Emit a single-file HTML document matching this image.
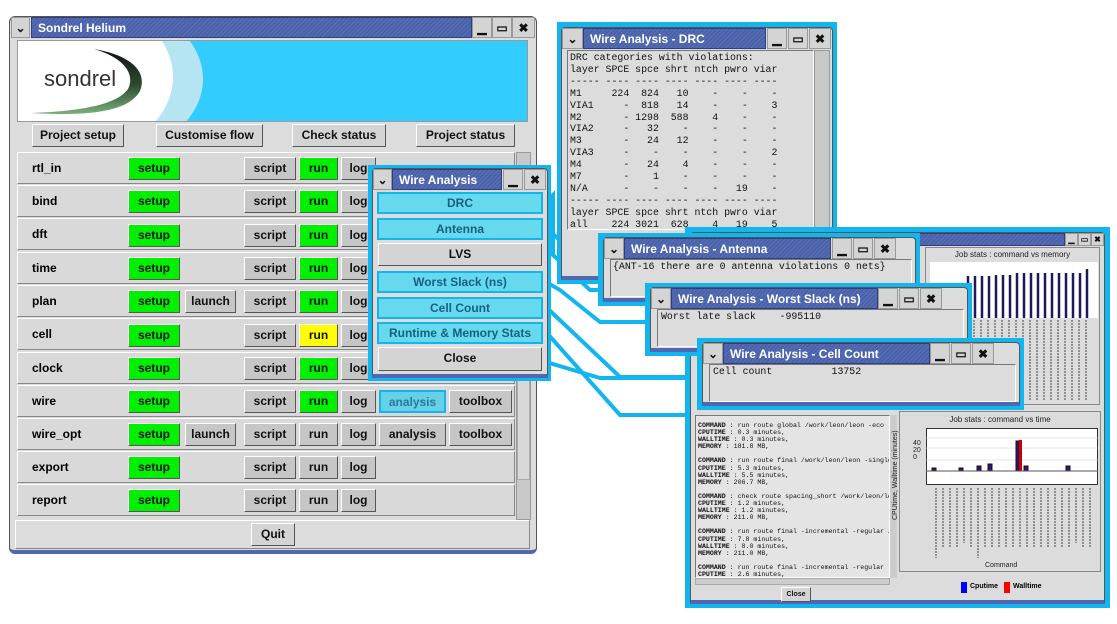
<!DOCTYPE html>
<html><head><meta charset="utf-8"><style>
*{box-sizing:border-box;margin:0;padding:0}
body{width:1117px;height:624px;background:#fff;position:relative;overflow:hidden;font-family:"Liberation Sans",sans-serif}
.a{position:absolute}
.frame{position:absolute;background:#13b5ef}
.win{position:absolute;background:#dcdcdc;border:1px solid #555;border-radius:4px 4px 0 0}
.tb{position:absolute;height:21px;background:repeating-linear-gradient(135deg,#4b62aa 0 2px,#5870b6 2px 3px);color:#fff;font-weight:bold;font-size:12px;line-height:21px;padding-left:6px;border:1px solid #2e3f80}
.tbtn{position:absolute;width:20px;height:21px;background:#d4d4d4;border:1px solid #999;font-size:12px;font-weight:bold;text-align:center;line-height:20px;color:#111}
.b{position:absolute;height:23px;background:#c6c6c6;border:1px solid;border-color:#fff #555 #555 #fff;font-weight:bold;font-size:12px;text-align:center;line-height:21px;color:#111}
.g{background:#00f000}
.row{position:absolute;left:17px;width:498px;height:32px;background:#d9d9d9;border:1px solid;border-color:#fff #888 #888 #fff}
.lbl{position:absolute;left:14px;top:8px;font-weight:bold;font-size:12px}
.mb{position:absolute;left:377px;width:166px;height:22px;background:#66d9ef;border:2px solid #13b5ef;color:#186080;font-weight:bold;font-size:12px;text-align:center;line-height:18px}
.mono{font-family:"Liberation Mono",monospace;font-size:9.9px;line-height:11.9px;white-space:pre;color:#111}
.txt{position:absolute;background:#dcdcdc;border:1px solid;border-color:#777 #fff #fff #777}
</style></head><body>

<svg class="a" style="left:0;top:0" width="1117" height="624">
<g fill="none" stroke="#13b5ef" stroke-width="4">
<polyline points="546,202 553,195 553,255 575,275 600,275"/>
<polyline points="546,228 560,240 560,262 590,290 600,290"/>
<polyline points="546,282 560,290 600,322 647,322"/>
<polyline points="546,307 620,377 697,377"/>
<polyline points="546,332 620,415 697,415"/>
<polyline points="546,362 600,378 690,378"/>
</g></svg>

<!-- MAIN WINDOW -->
<div class="win" style="left:9px;top:16px;width:528px;height:538px;border-radius:6px;border-bottom:4px solid #5068b0"></div>
<div class="tbtn" style="left:11px;top:17px;width:19px">⌄</div>
<div class="tb" style="left:31px;top:17px;width:441px">Sondrel Helium</div>
<div class="tbtn" style="left:472px;top:17px">▁</div>
<div class="tbtn" style="left:492px;top:17px">▭</div>
<div class="tbtn" style="left:512px;top:17px;width:23px">✖</div>
<div class="a" style="left:17px;top:40px;width:511px;height:82px;background:#33ccff;overflow:hidden;border:1px solid #999">
<svg class="a" style="left:0;top:0" width="511" height="82">
<defs><linearGradient id="sw" x1="0" y1="0" x2="0" y2="1"><stop offset="0" stop-color="#111"/><stop offset="0.55" stop-color="#2d4a2d"/><stop offset="1" stop-color="#7ab07a"/></linearGradient></defs>
<ellipse cx="60" cy="38" rx="125" ry="85" fill="#b5e5f2"/>
<ellipse cx="45" cy="36" rx="110" ry="82" fill="#fff"/>
<path d="M76,8 C112,14 130,30 122,50 C112,68 80,76 13,72 C70,70 100,62 110,48 C118,32 104,16 76,8Z" fill="url(#sw)"/>
</svg>
 <div class="a" style="left:26px;top:25px;font-size:22px;color:#333">sondrel</div>
</div>
<div class="b" style="left:32px;top:124px;width:92px;background:#d4d4d4">Project setup</div>
<div class="b" style="left:156px;top:124px;width:107px;background:#d4d4d4">Customise flow</div>
<div class="b" style="left:292px;top:124px;width:94px;background:#d4d4d4">Check status</div>
<div class="b" style="left:416px;top:124px;width:99px;background:#d4d4d4">Project status</div>
<div class="a" style="left:516px;top:152px;width:15px;height:368px;background:#c8c8c8;border:1px solid #999"></div>
<div class="a" style="left:517px;top:170px;width:13px;height:310px;background:#d8d8d8;border:1px solid #aaa"></div>

<div class="row" style="top:152px"><span class="lbl">rtl_in</span></div>
<div class="row" style="top:185px"><span class="lbl">bind</span></div>
<div class="row" style="top:218px"><span class="lbl">dft</span></div>
<div class="row" style="top:252px"><span class="lbl">time</span></div>
<div class="row" style="top:285px"><span class="lbl">plan</span></div>
<div class="row" style="top:318px"><span class="lbl">cell</span></div>
<div class="row" style="top:352px"><span class="lbl">clock</span></div>
<div class="row" style="top:385px"><span class="lbl">wire</span></div>
<div class="row" style="top:418px"><span class="lbl">wire_opt</span></div>
<div class="row" style="top:451px"><span class="lbl">export</span></div>
<div class="row" style="top:484px"><span class="lbl">report</span></div>

<div class="b g" style="left:128px;top:157px;width:52px">setup</div><div class="b" style="left:244px;top:157px;width:52px">script</div><div class="b g" style="left:299px;top:157px;width:39px">run</div><div class="b" style="left:341px;top:157px;width:35px">log</div>
<div class="b g" style="left:128px;top:190px;width:52px">setup</div><div class="b" style="left:244px;top:190px;width:52px">script</div><div class="b g" style="left:299px;top:190px;width:39px">run</div><div class="b" style="left:341px;top:190px;width:35px">log</div>
<div class="b g" style="left:128px;top:224px;width:52px">setup</div><div class="b" style="left:244px;top:224px;width:52px">script</div><div class="b g" style="left:299px;top:224px;width:39px">run</div><div class="b" style="left:341px;top:224px;width:35px">log</div>
<div class="b g" style="left:128px;top:257px;width:52px">setup</div><div class="b" style="left:244px;top:257px;width:52px">script</div><div class="b g" style="left:299px;top:257px;width:39px">run</div><div class="b" style="left:341px;top:257px;width:35px">log</div>
<div class="b g" style="left:128px;top:290px;width:52px">setup</div><div class="b" style="left:185px;top:290px;width:51px">launch</div><div class="b" style="left:244px;top:290px;width:52px">script</div><div class="b g" style="left:299px;top:290px;width:39px">run</div><div class="b" style="left:341px;top:290px;width:35px">log</div>
<div class="b g" style="left:128px;top:324px;width:52px">setup</div><div class="b" style="left:244px;top:324px;width:52px">script</div><div class="b" style="left:299px;top:324px;width:39px;background:#ffff00">run</div><div class="b" style="left:341px;top:324px;width:35px">log</div>
<div class="b g" style="left:128px;top:357px;width:52px">setup</div><div class="b" style="left:244px;top:357px;width:52px">script</div><div class="b g" style="left:299px;top:357px;width:39px">run</div><div class="b" style="left:341px;top:357px;width:35px">log</div>
<div class="b g" style="left:128px;top:390px;width:52px">setup</div><div class="b" style="left:244px;top:390px;width:52px">script</div><div class="b g" style="left:299px;top:390px;width:39px">run</div><div class="b" style="left:341px;top:390px;width:35px">log</div><div class="b" style="left:379px;top:390px;width:67px;background:#66d0e6;border:2px solid #13b5ef;color:#2a7a9a">analysis</div><div class="b" style="left:449px;top:390px;width:63px">toolbox</div>
<div class="b g" style="left:128px;top:423px;width:52px">setup</div><div class="b" style="left:185px;top:423px;width:51px">launch</div><div class="b" style="left:244px;top:423px;width:52px">script</div><div class="b" style="left:299px;top:423px;width:39px">run</div><div class="b" style="left:341px;top:423px;width:35px">log</div><div class="b" style="left:379px;top:423px;width:67px">analysis</div><div class="b" style="left:449px;top:423px;width:63px">toolbox</div>
<div class="b g" style="left:128px;top:456px;width:52px">setup</div><div class="b" style="left:244px;top:456px;width:52px">script</div><div class="b" style="left:299px;top:456px;width:39px">run</div><div class="b" style="left:341px;top:456px;width:35px">log</div>
<div class="b g" style="left:128px;top:489px;width:52px">setup</div><div class="b" style="left:244px;top:489px;width:52px">script</div><div class="b" style="left:299px;top:489px;width:39px">run</div><div class="b" style="left:341px;top:489px;width:35px">log</div>
<div class="a" style="left:15px;top:520px;width:515px;height:29px;border:1px solid;border-color:#fff #888 #888 #fff"></div>
<div class="b" style="left:251px;top:523px;width:44px;background:#d4d4d4">Quit</div>

<!-- WIRE ANALYSIS MENU -->
<div class="frame" style="left:368px;top:165px;width:183px;height:216px"></div>
<div class="win" style="left:372px;top:168px;width:176px;height:210px;border-bottom:4px solid #5068b0"></div>
<div class="tbtn" style="left:373px;top:169px;width:19px">⌄</div>
<div class="tb" style="left:392px;top:169px;width:110px">Wire Analysis</div>
<div class="tbtn" style="left:503px;top:169px">▁</div>
<div class="tbtn" style="left:524px;top:169px;width:22px">✖</div>
<div class="mb" style="top:192px">DRC</div>
<div class="mb" style="top:218px">Antenna</div>
<div class="b" style="left:378px;top:243px;width:164px;background:#d4d4d4">LVS</div>
<div class="mb" style="top:271px">Worst Slack (ns)</div>
<div class="mb" style="top:297px">Cell Count</div>
<div class="mb" style="top:322px">Runtime &amp; Memory Stats</div>
<div class="b" style="left:378px;top:347px;width:164px;height:24px;background:#d4d4d4">Close</div>

<!-- DRC WINDOW -->
<div class="frame" style="left:557px;top:22px;width:280px;height:262px"></div>
<div class="win" style="left:561px;top:27px;width:272px;height:253px;border-bottom:4px solid #5068b0"></div>
<div class="tbtn" style="left:562px;top:28px;width:21px">⌄</div>
<div class="tb" style="left:583px;top:28px;width:183px">Wire Analysis - DRC</div>
<div class="tbtn" style="left:767px;top:28px">▁</div>
<div class="tbtn" style="left:788px;top:28px">▭</div>
<div class="tbtn" style="left:809px;top:28px;width:22px">✖</div>
<div class="txt" style="left:567px;top:50px;width:247px;height:180px;overflow:hidden"><div class="mono a" style="left:2px;top:1px">DRC categories with violations:
layer SPCE spce shrt ntch pwro viar
----- ---- ---- ---- ---- ---- ----
M1     224  824   10    -    -    -
VIA1     -  818   14    -    -    3
M2       - 1298  588    4    -    -
VIA2     -   32    -    -    -    -
M3       -   24   12    -    -    -
VIA3     -    -    -    -    -    2
M4       -   24    4    -    -    -
M7       -    1    -    -    -    -
N/A      -    -    -    -   19    -
----- ---- ---- ---- ---- ---- ----
layer SPCE spce shrt ntch pwro viar
all    224 3021  628    4   19    5</div></div>
<div class="a" style="left:814px;top:50px;width:16px;height:180px;background:#c8c8c8;border:1px solid #999"></div>

<!-- BIG STATS WINDOW -->
<div class="frame" style="left:685px;top:227px;width:425px;height:381px"></div>
<div class="win" style="left:690px;top:232px;width:415px;height:372px;border-bottom:4px solid #5068b0"></div>
<div class="tb" style="left:900px;top:233px;width:165px;height:13px"></div>
<div class="tbtn" style="left:1065px;top:233px;width:13px;height:13px;font-size:8px;line-height:12px">▁</div>
<div class="tbtn" style="left:1078px;top:233px;width:13px;height:13px;font-size:8px;line-height:12px">▭</div>
<div class="tbtn" style="left:1091px;top:233px;width:13px;height:13px;font-size:8px;line-height:12px">✖</div>
<div class="a" style="left:925px;top:247px;width:175px;height:158px;border:1px solid #888"></div>
<div class="a" style="left:925px;top:250px;width:175px;font-size:8px;text-align:center;color:#222">Job stats : command vs memory</div>
<div class="a" style="left:930px;top:262px;width:168px;height:56px;background:#fff"></div>
<svg class="a" style="left:930px;top:262px" width="168" height="56"><g stroke="#1a1a5a" stroke-width="2.5">
<line x1="38" y1="56" x2="38" y2="14"/><line x1="45" y1="56" x2="45" y2="14"/><line x1="52" y1="56" x2="52" y2="14"/><line x1="59" y1="56" x2="59" y2="14"/><line x1="66" y1="56" x2="66" y2="13"/><line x1="73" y1="56" x2="73" y2="13"/><line x1="80" y1="56" x2="80" y2="13"/><line x1="87" y1="56" x2="87" y2="11"/><line x1="94" y1="56" x2="94" y2="11"/><line x1="101" y1="56" x2="101" y2="11"/><line x1="108" y1="56" x2="108" y2="11"/><line x1="115" y1="56" x2="115" y2="11"/><line x1="122" y1="56" x2="122" y2="11"/><line x1="129" y1="56" x2="129" y2="11"/><line x1="136" y1="56" x2="136" y2="11"/><line x1="143" y1="56" x2="143" y2="11"/><line x1="150" y1="56" x2="150" y2="11"/><line x1="157" y1="56" x2="157" y2="7"/></g></svg>
<svg class="a" style="left:960px;top:320px" width="140" height="80"><g stroke="#777" stroke-width="1.5" stroke-dasharray="2,1">
<line x1="7" y1="0" x2="7" y2="80"/><line x1="14" y1="0" x2="14" y2="80"/><line x1="21" y1="0" x2="21" y2="80"/><line x1="28" y1="0" x2="28" y2="80"/><line x1="35" y1="0" x2="35" y2="80"/><line x1="42" y1="0" x2="42" y2="80"/><line x1="49" y1="0" x2="49" y2="80"/><line x1="56" y1="0" x2="56" y2="80"/><line x1="63" y1="0" x2="63" y2="80"/><line x1="70" y1="0" x2="70" y2="80"/><line x1="77" y1="0" x2="77" y2="80"/><line x1="84" y1="0" x2="84" y2="80"/><line x1="91" y1="0" x2="91" y2="80"/><line x1="98" y1="0" x2="98" y2="80"/><line x1="105" y1="0" x2="105" y2="80"/><line x1="112" y1="0" x2="112" y2="80"/><line x1="119" y1="0" x2="119" y2="80"/><line x1="126" y1="0" x2="126" y2="80"/></g></svg>

<div class="txt" style="left:695px;top:415px;width:195px;height:163px;background:#e4e4e4;overflow:hidden"><div class="a" style="left:2px;top:6px;font-family:'Liberation Mono',monospace;font-size:6.6px;line-height:7.1px;white-space:pre;color:#111"><b>COMMAND</b> : run route global /work/leon/leon -eco
<b>CPUTIME</b> : 0.3 minutes,
<b>WALLTIME</b> : 0.3 minutes,
<b>MEMORY</b> : 181.8 MB,

<b>COMMAND</b> : run route final /work/leon/leon -singlep
<b>CPUTIME</b> : 5.3 minutes,
<b>WALLTIME</b> : 5.5 minutes,
<b>MEMORY</b> : 206.7 MB,

<b>COMMAND</b> : check route spacing_short /work/leon/leo
<b>CPUTIME</b> : 1.2 minutes,
<b>WALLTIME</b> : 1.2 minutes,
<b>MEMORY</b> : 211.0 MB,

<b>COMMAND</b> : run route final -incremental -regular /w
<b>CPUTIME</b> : 7.8 minutes,
<b>WALLTIME</b> : 8.0 minutes,
<b>MEMORY</b> : 211.0 MB,

<b>COMMAND</b> : run route final -incremental -regular -r
<b>CPUTIME</b> : 2.6 minutes,</div></div>
<div class="a" style="left:890px;top:415px;width:7px;height:163px;background:#ccc"></div>
<div class="a" style="left:695px;top:578px;width:195px;height:7px;background:#ccc;border:1px solid #aaa"></div>
<div class="b" style="left:781px;top:587px;width:30px;height:15px;font-size:7px;line-height:13px;background:#d4d4d4">Close</div>

<div class="a" style="left:899px;top:411px;width:202px;height:161px;border:1px solid #888"></div>
<div class="a" style="left:899px;top:415px;width:202px;font-size:8px;text-align:center;color:#222">Job stats : command vs time</div>
<div class="a" style="left:926px;top:428px;width:172px;height:57px;background:#fff;border:1px solid #333"></div>
<svg class="a" style="left:926px;top:428px" width="172" height="57"><g stroke="#ccc" stroke-width="0.5"><line x1="0" y1="10" x2="172" y2="10"/><line x1="0" y1="20" x2="172" y2="20"/><line x1="0" y1="32" x2="172" y2="32"/><line x1="0" y1="43" x2="172" y2="43"/></g>
<g fill="#1a1a8a" stroke="#400">
<rect x="6" y="40" width="4" height="3"/><rect x="33" y="40" width="4" height="3"/><rect x="51" y="38" width="4" height="5"/><rect x="62" y="36" width="4" height="7"/><rect x="90" y="13" width="3" height="30"/><rect x="98" y="38" width="4" height="5"/><rect x="140" y="38" width="4" height="5"/></g>
<g fill="#c00"><rect x="93" y="12" width="3" height="31"/></g>
<line x1="0" y1="43" x2="172" y2="43" stroke="#555"/></svg>
<div class="a" style="left:913px;top:440px;font-size:7px;color:#222">40<br>20<br>0</div>
<div class="a" style="left:892px;top:520px;font-size:7px;transform:rotate(-90deg);transform-origin:0 0;color:#222">CPUtime, Walltime (minutes)</div>
<svg class="a" style="left:932px;top:488px" width="166" height="70"><g stroke="#777" stroke-width="1.5" stroke-dasharray="2,1">
<line x1="4" y1="0" x2="4" y2="70"/><line x1="11" y1="0" x2="11" y2="60"/><line x1="18" y1="0" x2="18" y2="60"/><line x1="25" y1="0" x2="25" y2="60"/><line x1="32" y1="0" x2="32" y2="55"/><line x1="39" y1="0" x2="39" y2="60"/><line x1="46" y1="0" x2="46" y2="70"/><line x1="53" y1="0" x2="53" y2="60"/><line x1="60" y1="0" x2="60" y2="60"/><line x1="67" y1="0" x2="67" y2="60"/><line x1="74" y1="0" x2="74" y2="60"/><line x1="81" y1="0" x2="81" y2="60"/><line x1="88" y1="0" x2="88" y2="60"/><line x1="95" y1="0" x2="95" y2="60"/><line x1="102" y1="0" x2="102" y2="60"/><line x1="109" y1="0" x2="109" y2="60"/><line x1="116" y1="0" x2="116" y2="60"/><line x1="123" y1="0" x2="123" y2="60"/><line x1="130" y1="0" x2="130" y2="60"/><line x1="137" y1="0" x2="137" y2="60"/><line x1="144" y1="0" x2="144" y2="55"/><line x1="151" y1="0" x2="151" y2="60"/><line x1="158" y1="0" x2="158" y2="60"/></g></svg>
<div class="a" style="left:985px;top:562px;font-size:7px;color:#222">Command</div>
<div class="a" style="left:961px;top:582px;width:6px;height:11px;background:#00f"></div>
<div class="a" style="left:970px;top:583px;font-size:7px;font-weight:bold">Cputime</div>
<div class="a" style="left:1004px;top:582px;width:6px;height:11px;background:#f00"></div>
<div class="a" style="left:1013px;top:583px;font-size:7px;font-weight:bold">Walltime</div>

<!-- ANTENNA -->
<div class="frame" style="left:598px;top:233px;width:322px;height:73px"></div>
<div class="win" style="left:603px;top:237px;width:313px;height:65px;border-bottom:4px solid #5068b0"></div>
<div class="tbtn" style="left:604px;top:238px;width:20px">⌄</div>
<div class="tb" style="left:624px;top:238px;width:207px">Wire Analysis - Antenna</div>
<div class="tbtn" style="left:832px;top:238px">▁</div>
<div class="tbtn" style="left:853px;top:238px">▭</div>
<div class="tbtn" style="left:874px;top:238px;width:22px">✖</div>
<div class="txt" style="left:610px;top:259px;width:302px;height:38px"><div class="mono a" style="left:2px;top:1px">{ANT-16 there are 0 antenna violations 0 nets}</div></div>

<!-- WORST SLACK -->
<div class="frame" style="left:645px;top:283px;width:327px;height:73px"></div>
<div class="win" style="left:650px;top:287px;width:318px;height:65px;border-bottom:4px solid #5068b0"></div>
<div class="tbtn" style="left:651px;top:288px;width:20px">⌄</div>
<div class="tb" style="left:671px;top:288px;width:207px">Wire Analysis - Worst Slack (ns)</div>
<div class="tbtn" style="left:878px;top:288px">▁</div>
<div class="tbtn" style="left:899px;top:288px">▭</div>
<div class="tbtn" style="left:920px;top:288px;width:22px">✖</div>
<div class="txt" style="left:657px;top:309px;width:307px;height:38px"><div class="mono a" style="left:3px;top:1px">Worst late slack    -995110</div></div>

<!-- CELL COUNT -->
<div class="frame" style="left:697px;top:338px;width:327px;height:72px"></div>
<div class="win" style="left:702px;top:342px;width:318px;height:64px;border-bottom:4px solid #5068b0"></div>
<div class="tbtn" style="left:703px;top:343px;width:20px">⌄</div>
<div class="tb" style="left:723px;top:343px;width:207px">Wire Analysis - Cell Count</div>
<div class="tbtn" style="left:930px;top:343px">▁</div>
<div class="tbtn" style="left:951px;top:343px">▭</div>
<div class="tbtn" style="left:972px;top:343px;width:22px">✖</div>
<div class="txt" style="left:709px;top:364px;width:307px;height:38px"><div class="mono a" style="left:3px;top:1px">Cell count          13752</div></div>

</body></html>
